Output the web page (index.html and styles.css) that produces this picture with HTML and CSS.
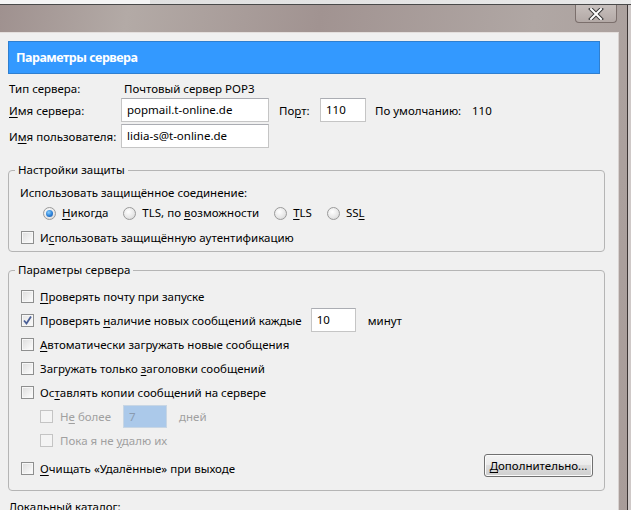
FILE: index.html
```html
<!DOCTYPE html>
<html lang="ru">
<head>
    <meta charset="UTF-8">
    <title>Параметры сервера</title>
    <link rel="stylesheet" href="styles.css">
</head>
<body>
    <div class="strip"></div>
    <div class="window">
        <div class="titlebar">
            <div class="close">
                <svg width="16" height="12" viewBox="0 0 16 12">
                    <path d="M3 1 L13 11 M13 1 L3 11" stroke="#3a3a3a" stroke-width="4" stroke-linecap="square"/>
                    <path d="M3 1 L13 11 M13 1 L3 11" stroke="#ffffff" stroke-width="2" stroke-linecap="square"/>
                </svg>
            </div>
        </div>
        <div class="client">
            <div class="header">Параметры сервера</div>

            <div class="server">
                <div class="row row-type">
                    <span class="lbl">Тип сервера:</span>
                    <span class="value">Почтовый сервер POP3</span>
                </div>
                <div class="row">
                    <span class="lbl"><u>И</u>мя сервера:</span>
                    <span class="field field-host">popmail.t-online.de</span>
                    <span class="port-lbl">По<u>р</u>т:</span>
                    <span class="field field-port">110</span>
                    <span class="default-lbl">По умолчанию:</span>
                    <span>110</span>
                </div>
                <div class="row">
                    <span class="lbl">И<u>м</u>я пользователя:</span>
                    <span class="field field-host">lidia-s@t-online.de</span>
                </div>
            </div>

            <fieldset class="group group-security">
                <legend>Настройки защиты</legend>
                <div class="line">Использовать защищённое соединение:</div>
                <div class="line radios">
                    <span class="opt"><span class="radio on"></span><span><u>Н</u>икогда</span></span>
                    <span class="opt"><span class="radio"></span><span>TLS, по <u>в</u>озможности</span></span>
                    <span class="opt"><span class="radio"></span><span><u>T</u>LS</span></span>
                    <span class="opt"><span class="radio"></span><span>SS<u>L</u></span></span>
                </div>
                <div class="check-row">
                    <span class="box"></span><span>И<u>с</u>пользовать защищённую аутентификацию</span>
                </div>
            </fieldset>

            <fieldset class="group group-server">
                <legend>Параметры сервера</legend>
                <div class="check-row">
                    <span class="box"></span><span><u>П</u>роверять почту при запуске</span>
                </div>
                <div class="check-row">
                    <span class="box checked">
                        <svg width="11" height="11" viewBox="0 0 11 11"><path d="M2 5.5 L4.5 8.5 L9 1.5" fill="none" stroke="#4a5f97" stroke-width="1.8"/></svg>
                    </span><span>Проверять <u>н</u>аличие новых сообщений каждые</span>
                    <span class="field field-min">10</span>
                    <span class="unit">минут</span>
                </div>
                <div class="check-row">
                    <span class="box"></span><span><u>А</u>втоматически загружать новые сообщения</span>
                </div>
                <div class="check-row">
                    <span class="box"></span><span>Загружать только <u>з</u>аголовки сообщений</span>
                </div>
                <div class="check-row">
                    <span class="box"></span><span>Ос<u>т</u>авлять копии сообщений на сервере</span>
                </div>
                <div class="check-row sub disabled">
                    <span class="box"></span><span>Н<u>е</u> более</span>
                    <span class="field field-days">7</span>
                    <span class="unit">дней</span>
                </div>
                <div class="check-row sub disabled">
                    <span class="box"></span><span>Пока я не <u>у</u>далю их</span>
                </div>
                <div class="check-row last">
                    <span class="box"></span><span><u>О</u>чищать «Удалённые» при выходе</span>
                    <span class="button"><u>Д</u>ополнительно...</span>
                </div>
            </fieldset>

            <div class="local">Локальный каталог:</div>
        </div>
    </div>
</body>
</html>
```

FILE: styles.css
```css
body {
    margin: 0;
    width: 631px;
    height: 510px;
    overflow: hidden;
    background: #cfc9c8;
    font-family: "Noto Sans", sans-serif;
    font-size: 11.5px;
    color: #000;
}

u {
    text-decoration: underline;
    text-underline-offset: 2px;
}

.strip {
    height: 4px;
    background: linear-gradient(to right, #f4f4f4 0, #f4f4f4 150px, #e0e0e0 150px, #e8e8e8 100%);
    border-bottom: 1px solid #4a4a4a;
}

.window {
    width: 627px;
    height: 505px;
    display: flex;
    flex-direction: column;
    background: linear-gradient(100deg, #9f918f 0%, #b3aaa6 18%, #a19391 45%, #b0a7a4 75%, #a89c99 100%);
    border-right: 1px solid #3c3534;
}

.titlebar {
    flex-shrink: 0;
    height: 27px;
    display: flex;
    justify-content: flex-end;
}

.close {
    width: 40px;
    height: 17px;
    margin-right: 10px;
    border: 1px solid #7b6f6c;
    border-top: none;
    border-radius: 0 0 4px 4px;
    background: linear-gradient(to bottom, #c7bfbc, #b3a9a6);
    display: flex;
    justify-content: center;
    align-items: center;
}

.client {
    flex: 1;
    min-height: 0;
    overflow: hidden;
    margin-right: 8px;
    background: #f0f0f0;
    border-top: 1px solid #e4dfdd;
    border-right: 1px solid #d8d2d0;
}

.header {
    margin: 8px 18px 0 8px;
    height: 31px;
    background: #3399ff;
    border: 1px solid #2f7fd0;
    color: #fff;
    font-weight: bold;
    font-size: 12.5px;
    letter-spacing: -0.5px;
    line-height: 31px;
    padding-left: 7px;
}

.server {
    padding-left: 9px;
    margin-top: 5px;
}

.row {
    display: flex;
    align-items: center;
    height: 24px;
    margin-bottom: 2px;
}

.row-type {
    height: 19px;
    margin-bottom: 0;
}

.lbl {
    width: 112px;
}

.value {
    padding-left: 3px;
}

.field {
    box-sizing: border-box;
    height: 24px;
    line-height: 22px;
    background: #fff;
    border: 1px solid #c5c5c5;
    border-top-color: #abadb3;
    padding-left: 5px;
}

.field-host {
    width: 148px;
}

.port-lbl {
    margin-left: 10px;
    width: 41px;
}

.field-port {
    width: 46px;
}

.default-lbl {
    margin-left: 9px;
    width: 97px;
}

.group {
    box-sizing: border-box;
    width: 597px;
    margin: 14px 0 0 8px;
    padding: 0 0 2px 0;
    border: 1px solid #b5b5b5;
    border-radius: 4px;
}

.group legend {
    margin-left: 6px;
    padding: 0 3px;
    line-height: 16px;
}

.group-server {
    margin-top: 10px;
    padding: 6px 0 10px 0;
}

.group-security .line {
    height: 20px;
    line-height: 20px;
    padding-left: 11px;
}

.group-security .line:first-of-type {
    margin-top: 5px;
}

.radios {
    display: flex;
    align-items: center;
}

.radios .opt {
    display: flex;
    align-items: center;
    margin-right: 15px;
}

.radios .opt:first-child {
    margin-left: 23px;
}

.radio {
    box-sizing: border-box;
    width: 13px;
    height: 13px;
    border-radius: 50%;
    border: 1px solid #9a9a9a;
    background: radial-gradient(circle at 40% 35%, #ffffff 0, #e6e6e6 60%, #cfcfcf 100%);
    margin-right: 6px;
    position: relative;
}

.radio.on::after {
    content: "";
    position: absolute;
    left: 2px;
    top: 2px;
    width: 7px;
    height: 7px;
    border-radius: 50%;
    background: radial-gradient(circle at 40% 35%, #8ad0ff 0, #2a7fd6 55%, #1a4f9a 100%);
}

.check-row {
    display: flex;
    align-items: center;
    height: 24px;
    padding-left: 12px;
}

.group-security .check-row {
    margin-top: 2px;
}

.box {
    box-sizing: border-box;
    flex-shrink: 0;
    width: 13px;
    height: 13px;
    border: 1px solid #8e8f8f;
    background: linear-gradient(135deg, #dcdcdc 0%, #f4f4f4 70%, #ffffff 100%);
    box-shadow: inset 0 0 0 1px #f7f7f7;
    margin-right: 6px;
    display: flex;
    align-items: center;
    justify-content: center;
}

.box.checked {
    background: linear-gradient(135deg, #e6e6e6 0%, #fafafa 100%);
}

.field-min {
    width: 45px;
    margin-left: 9px;
}

.unit {
    margin-left: 12px;
}

.sub {
    padding-left: 31px;
}

.sub .box {
    margin-right: 7px;
}

.disabled {
    color: #a0a0a0;
}

.disabled .box {
    border-color: #c4c4c4;
    background: #f4f4f4;
    box-shadow: none;
}

.field-days {
    width: 44px;
    height: 23px;
    margin-left: 12px;
    background: #abc9ea;
    border-color: #c8d6e4;
    color: #8a9bb0;
}

.last {
    margin-top: 4px;
}

.button {
    box-sizing: border-box;
    margin-left: auto;
    margin-right: 11px;
    margin-bottom: 5px;
    width: 109px;
    height: 23px;
    line-height: 21px;
    text-align: center;
    border: 1px solid #707070;
    border-radius: 3px;
    background: linear-gradient(to bottom, #f3f3f3 0%, #ebebeb 45%, #dddddd 50%, #cfcfcf 100%);
    box-shadow: inset 0 0 0 1px #fbfbfb;
}

.local {
    margin: 8px 0 0 9px;
}
```
